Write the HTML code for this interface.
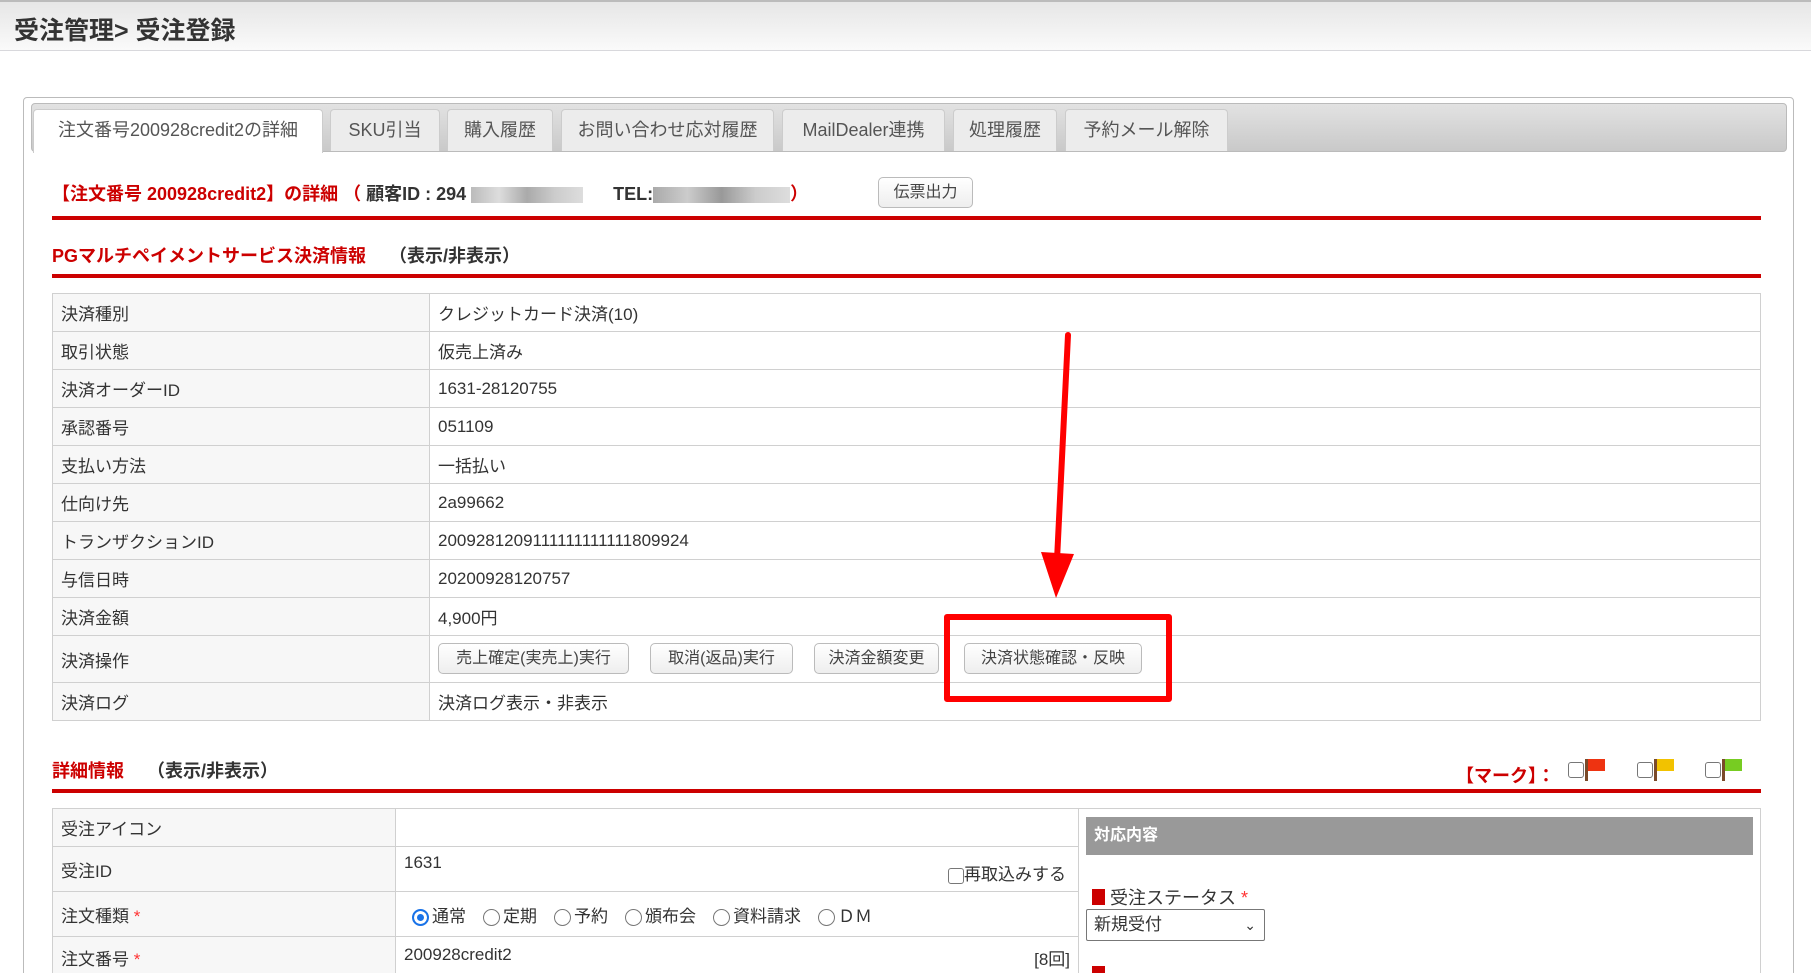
<!DOCTYPE html>
<html style="overflow:hidden;height:973px"><head><meta charset="utf-8"><style>
*{box-sizing:border-box;margin:0;padding:0}
body{width:1811px;height:973px;overflow:hidden;background:#fff;font-family:"Liberation Sans","Noto Sans CJK JP",sans-serif;color:#333;position:relative}
.a{position:absolute}
.hdr{left:0;top:0;width:1811px;height:51px;background:linear-gradient(#e6e6e6,#fafafa);border-top:2px solid #bbb;border-bottom:1px solid #d8d8dc}
.hdr span{position:absolute;left:14px;top:9px;font-size:25px;font-weight:bold;color:#333}
.box{left:23px;top:97px;width:1771px;height:890px;border:1px solid #bbb;border-radius:4px}
.tabbar{left:31px;top:103px;width:1756px;height:49px;background:linear-gradient(#e2e2e2,#c9c9c9);border:1px solid #bbb;border-radius:4px}
.tab{top:109px;height:42px;background:#ececec;border:1px solid #ccc;border-bottom:none;border-radius:4px 4px 0 0;font-size:18px;color:#555;text-align:center;line-height:40px}
.tab.on{background:#fff;height:44px}
.red{color:#c00}
.rl{left:52px;width:1709px;height:4px;background:#c00}
.btn{border:1px solid #bbb;border-radius:5px;background:linear-gradient(#fff,#eee);font-size:16px;color:#444;text-align:center;line-height:29px;height:31px}
table{border-collapse:collapse;font-size:17px;color:#333;table-layout:fixed}
td{border:1px solid #d0d0d0;padding:0 8px;vertical-align:middle}
td.l{background:#f7f7f7}
.cb{display:inline-block;width:16px;height:16px;border:1px solid #777;border-radius:3px;vertical-align:middle;background:#fff}
.rd{display:inline-block;width:17px;height:17px;border:1px solid #777;border-radius:50%;vertical-align:middle;margin-right:3px;background:#fff}
.rd.on{border:2px solid #1a73e8;box-shadow:inset 0 0 0 3px #fff;background:#1a73e8}
</style></head><body>
<div class="a hdr"><span>受注管理&gt; 受注登録</span></div>
<div class="a box"></div>
<div class="a tabbar"></div>
<div class="a tab on" style="left:33px;width:290px">注文番号200928credit2の詳細</div>
<div class="a tab" style="left:330px;width:110px">SKU引当</div>
<div class="a tab" style="left:447px;width:106px">購入履歴</div>
<div class="a tab" style="left:561px;width:213px">お問い合わせ応対履歴</div>
<div class="a tab" style="left:782px;width:163px">MailDealer連携</div>
<div class="a tab" style="left:953px;width:104px">処理履歴</div>
<div class="a tab" style="left:1065px;width:163px">予約メール解除</div>

<div class="a" style="left:52px;top:180px;font-size:18px;font-weight:bold;white-space:nowrap"><span class="red">【注文番号 200928credit2】の詳細 （</span> 顧客ID : 294 <span style="display:inline-block;width:112px;height:16px;background:linear-gradient(90deg,#bbb,#ddd,#aaa,#ccc,#ddd);vertical-align:middle"></span>&nbsp;&nbsp;&nbsp;&nbsp;&nbsp; TEL:<span style="display:inline-block;width:137px;height:16px;background:linear-gradient(90deg,#aaa,#ccc,#999,#ccc,#ddd);vertical-align:middle"></span><span class="red">）</span></div>
<div class="a btn" style="left:878px;top:177px;width:95px">伝票出力</div>
<div class="a rl" style="top:216px"></div>
<div class="a" style="left:52px;top:242px;font-size:18px;font-weight:bold;white-space:nowrap"><span class="red">PGマルチペイメントサービス決済情報</span>　 （表示/非表示）</div>
<div class="a rl" style="top:274px"></div>

<table class="a" style="left:52px;top:293px;width:1709px">
<colgroup><col style="width:377px"><col></colgroup>
<tr style="height:38px"><td class="l">決済種別</td><td>クレジットカード決済(10)</td></tr>
<tr style="height:38px"><td class="l">取引状態</td><td>仮売上済み</td></tr>
<tr style="height:38px"><td class="l">決済オーダーID</td><td>1631-28120755</td></tr>
<tr style="height:38px"><td class="l">承認番号</td><td>051109</td></tr>
<tr style="height:38px"><td class="l">支払い方法</td><td>一括払い</td></tr>
<tr style="height:38px"><td class="l">仕向け先</td><td>2a99662</td></tr>
<tr style="height:38px"><td class="l">トランザクションID</td><td>2009281209111111111111809924</td></tr>
<tr style="height:38px"><td class="l">与信日時</td><td>20200928120757</td></tr>
<tr style="height:38px"><td class="l">決済金額</td><td>4,900円</td></tr>
<tr style="height:47px"><td class="l">決済操作</td><td></td></tr>
<tr style="height:38px"><td class="l">決済ログ</td><td>決済ログ表示・非表示</td></tr>
</table>
<div class="a btn" style="left:438px;top:643px;width:191px">売上確定(実売上)実行</div>
<div class="a btn" style="left:650px;top:643px;width:143px">取消(返品)実行</div>
<div class="a btn" style="left:814px;top:643px;width:125px">決済金額変更</div>
<div class="a btn" style="left:964px;top:643px;width:178px">決済状態確認・反映</div>
<div class="a" style="left:944px;top:614px;width:228px;height:88px;border:6px solid #f00;border-radius:3px"></div>
<svg class="a" style="left:1030px;top:330px" width="60" height="275"><line x1="38" y1="5" x2="27" y2="230" stroke="#f00" stroke-width="6" stroke-linecap="round"/><polygon points="11,222 44,224 26,268" fill="#f00"/></svg>

<div class="a" style="left:52px;top:757px;font-size:18px;font-weight:bold;white-space:nowrap"><span class="red">詳細情報</span>　 （表示/非表示）</div>
<div class="a red" style="left:1456px;top:762px;font-size:18px;font-weight:bold">【マーク】：</div>
<div class="a" style="left:1568px;top:758px"><span class="cb"></span><svg width="22" height="24" style="vertical-align:middle"><rect x="1" y="1" width="3" height="22" fill="#7a4a2a"/><rect x="4" y="1" width="17" height="12" fill="#e31"/></svg></div>
<div class="a" style="left:1637px;top:758px"><span class="cb"></span><svg width="22" height="24" style="vertical-align:middle"><rect x="1" y="1" width="3" height="22" fill="#7a4a2a"/><rect x="4" y="1" width="17" height="12" fill="#f2c200"/></svg></div>
<div class="a" style="left:1705px;top:758px"><span class="cb"></span><svg width="22" height="24" style="vertical-align:middle"><rect x="1" y="1" width="3" height="22" fill="#7a4a2a"/><rect x="4" y="1" width="17" height="12" fill="#7c2"/></svg></div>
<div class="a rl" style="top:789px"></div>

<table class="a" style="left:52px;top:808px;width:1709px">
<colgroup><col style="width:343px"><col style="width:683px"><col></colgroup>
<tr style="height:38px"><td class="l">受注アイコン</td><td></td><td rowspan="4" style="vertical-align:top;padding:0"></td></tr>
<tr style="height:45px"><td class="l">受注ID</td><td style="position:relative"><span style="position:absolute;top:6px;left:8px">1631</span><span style="position:absolute;right:12px;top:13px"><span class="cb"></span>再取込みする</span></td></tr>
<tr style="height:45px"><td class="l">注文種類 <span style="color:#f33">*</span></td><td style="padding-left:16px"><span class="rd on"></span>通常　<span class="rd"></span>定期　<span class="rd"></span>予約　<span class="rd"></span>頒布会　<span class="rd"></span>資料請求　<span class="rd"></span>ＤＭ</td></tr>
<tr style="height:60px"><td class="l" style="vertical-align:top;padding-top:8px">注文番号 <span style="color:#f33">*</span></td><td style="position:relative"><span style="position:absolute;top:8px;left:8px">200928credit2</span><span style="position:absolute;right:8px;top:8px">[8回]</span></td></tr>
</table>
<div class="a" style="left:1086px;top:817px;width:667px;height:38px;background:#999;color:#fff;font-weight:bold;font-size:16px;line-height:38px;padding-left:8px">対応内容</div>
<div class="a" style="left:1092px;top:884px;font-size:18px"><span style="display:inline-block;width:13px;height:16px;background:#c00;vertical-align:-1px"></span> 受注ステータス <span style="color:#f33">*</span></div>
<div class="a" style="left:1086px;top:909px;width:179px;height:32px;border:1px solid #777;border-radius:2px;font-size:17px;line-height:30px;padding-left:7px">新規受付<span style="position:absolute;right:8px;top:0;font-size:14px">&#8964;</span></div>
<div class="a" style="left:1092px;top:966px;width:13px;height:10px;background:#c00"></div>
</body></html>
